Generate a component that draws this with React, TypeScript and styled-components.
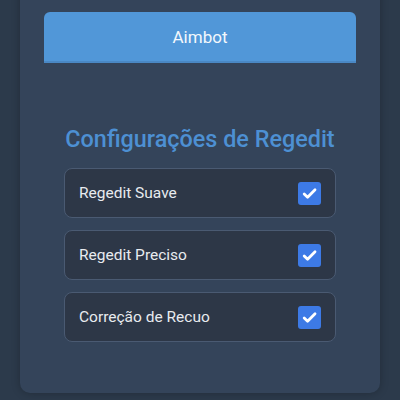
import React, { useState } from "react";
import styled, { createGlobalStyle } from "styled-components";

const GlobalStyle = createGlobalStyle`
  html, body {
    margin: 0;
    padding: 0;
    background: #2c3a4b;
    font-family: Roboto, "Liberation Sans", sans-serif;
  }
`;

const Page = styled.div`
  width: 400px;
  height: 400px;
  overflow: hidden;
  box-sizing: border-box;
  padding: 0 20px;
`;

const Panel = styled.div`
  height: 413px;
  margin-top: -20px;
  padding: 32px 24px 0;
  box-sizing: border-box;
  background: #34445a;
  border-radius: 10px;
  box-shadow: 0 0 8px rgba(0, 0, 0, 0.25);
`;

const TabButton = styled.button`
  display: block;
  width: 100%;
  height: 51px;
  border: none;
  border-bottom: 2px solid #4a88c4;
  border-radius: 6px 6px 0 0;
  background: #5197d8;
  color: #f3f7fc;
  font-family: Roboto, "Liberation Sans", sans-serif;
  font-size: 17px;
  cursor: pointer;
`;

const Section = styled.div`
  padding: 62px 20px 0;
`;

const Title = styled.h2`
  margin: 0 0 15px;
  color: #4d90d3;
  font-size: 23.4px;
  font-weight: 500;
  text-align: center;
  white-space: nowrap;
`;

const List = styled.div`
  display: flex;
  flex-direction: column;
  gap: 12px;
`;

const Row = styled.label`
  display: flex;
  align-items: center;
  justify-content: space-between;
  height: 50px;
  box-sizing: border-box;
  padding: 0 14px;
  background: #2d3747;
  border: 1px solid #4a5a72;
  border-radius: 8px;
  color: #e8ebef;
  font-size: 15.5px;
  cursor: pointer;
`;

const Box = styled.span<{ $on: boolean }>`
  display: flex;
  align-items: center;
  justify-content: center;
  width: 23px;
  height: 23px;
  border-radius: 3px;
  background: ${(p) => (p.$on ? "#3d7ae6" : "#ffffff")};
`;

const options = ["Regedit Suave", "Regedit Preciso", "Correção de Recuo"];

function Check({ on }: { on: boolean }) {
  return (
    <Box $on={on}>
      {on && (
        <svg width="17" height="17" viewBox="0 0 16 16">
          <path
            d="M3 8.4l3.2 3.2L13.2 4.4"
            fill="none"
            stroke="#ffffff"
            strokeWidth="2.6"
            strokeLinecap="round"
            strokeLinejoin="round"
          />
        </svg>
      )}
    </Box>
  );
}

export default function App() {
  const [checked, setChecked] = useState<boolean[]>([true, true, true]);

  return (
    <>
      <GlobalStyle />
      <Page>
        <Panel>
          <TabButton>Aimbot</TabButton>
          <Section>
            <Title>Configurações de Regedit</Title>
            <List>
              {options.map((name, i) => (
                <Row
                  key={name}
                  onClick={() =>
                    setChecked((c) => c.map((v, j) => (j === i ? !v : v)))
                  }
                >
                  {name}
                  <Check on={checked[i]} />
                </Row>
              ))}
            </List>
          </Section>
        </Panel>
      </Page>
    </>
  );
}
